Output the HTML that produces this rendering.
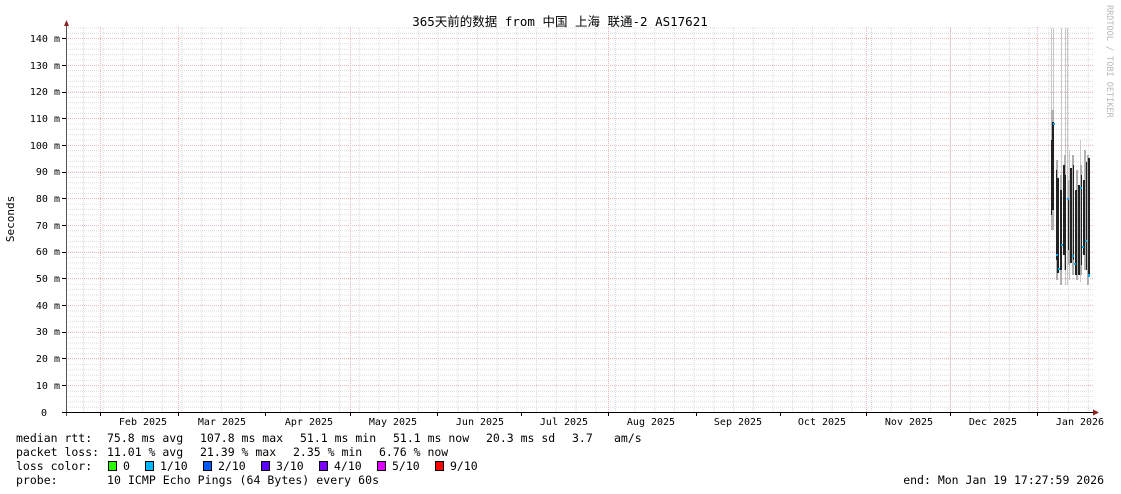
<!DOCTYPE html>
<html><head><meta charset="utf-8"><style>
html,body{margin:0;padding:0;background:#fff;}
svg{display:block;}
text{font-family:"DejaVu Sans Mono","Liberation Mono","Noto Sans CJK SC",monospace;fill:#000;}
</style></head><body>
<svg width="1121" height="494" viewBox="0 0 1121 494" xmlns="http://www.w3.org/2000/svg">
<defs>
<pattern id="hmin" patternUnits="userSpaceOnUse" x="0" y="412" width="4" height="5.342">
<line x1="0" y1="0.5" x2="4" y2="0.5" stroke="#dcdcdc" stroke-width="1" stroke-dasharray="1,1"/>
</pattern>
<pattern id="vmin" patternUnits="userSpaceOnUse" x="83" y="0" width="19.7" height="4">
<line x1="0.5" y1="0" x2="0.5" y2="4" stroke="#d8d8d8" stroke-width="1" stroke-dasharray="1,1"/>
</pattern>
</defs>
<rect x="66" y="27" width="1027" height="385" fill="url(#hmin)"/>
<rect x="70" y="27" width="1023" height="385" fill="url(#vmin)"/>
<g stroke="#f3b8b8" stroke-width="1" stroke-dasharray="1,1">
<line x1="66" y1="38.5" x2="1093" y2="38.5"/>
<line x1="66" y1="65.5" x2="1093" y2="65.5"/>
<line x1="66" y1="92.5" x2="1093" y2="92.5"/>
<line x1="66" y1="118.5" x2="1093" y2="118.5"/>
<line x1="66" y1="145.5" x2="1093" y2="145.5"/>
<line x1="66" y1="172.5" x2="1093" y2="172.5"/>
<line x1="66" y1="198.5" x2="1093" y2="198.5"/>
<line x1="66" y1="225.5" x2="1093" y2="225.5"/>
<line x1="66" y1="252.5" x2="1093" y2="252.5"/>
<line x1="66" y1="278.5" x2="1093" y2="278.5"/>
<line x1="66" y1="305.5" x2="1093" y2="305.5"/>
<line x1="66" y1="332.5" x2="1093" y2="332.5"/>
<line x1="66" y1="358.5" x2="1093" y2="358.5"/>
<line x1="66" y1="385.5" x2="1093" y2="385.5"/>
<line x1="100.5" y1="27" x2="100.5" y2="412"/>
<line x1="178.5" y1="27" x2="178.5" y2="412"/>
<line x1="350.5" y1="27" x2="350.5" y2="412"/>
<line x1="608.5" y1="27" x2="608.5" y2="412"/>
<line x1="866.5" y1="27" x2="866.5" y2="412"/>
<line x1="950.5" y1="27" x2="950.5" y2="412"/>
<line x1="1037.5" y1="27" x2="1037.5" y2="412"/>
</g>
<g stroke="#c8c8c8" stroke-width="1">
<line x1="1051.5" y1="28" x2="1051.5" y2="230"/>
<line x1="1053.5" y1="28" x2="1053.5" y2="215"/>
<line x1="1061.5" y1="28" x2="1061.5" y2="285"/>
<line x1="1065.5" y1="28" x2="1065.5" y2="285"/>
<line x1="1067.5" y1="28" x2="1067.5" y2="285"/>
<line x1="1069.5" y1="150" x2="1069.5" y2="280"/>
<line x1="1080.5" y1="140" x2="1080.5" y2="282"/>
</g>
<g fill="#b0b0b0">
<rect x="1051" y="110" width="3" height="120"/>
<rect x="1056" y="160" width="2" height="120"/>
<rect x="1060" y="175" width="2" height="110"/>
<rect x="1064" y="155" width="2" height="115"/>
<rect x="1068" y="180" width="2" height="85"/>
<rect x="1072" y="155" width="2" height="120"/>
<rect x="1076" y="170" width="2" height="110"/>
<rect x="1080" y="165" width="2" height="110"/>
<rect x="1084" y="150" width="2" height="120"/>
<rect x="1087" y="155" width="2" height="130"/>
</g>
<g fill="#222">
<rect x="1051" y="140" width="1" height="75"/>
<rect x="1052" y="122" width="2" height="88"/>
<rect x="1056" y="170" width="1" height="90"/>
<rect x="1057" y="178" width="2" height="95"/>
<rect x="1060" y="190" width="2" height="80"/>
<rect x="1063" y="165" width="2" height="90"/>
<rect x="1065" y="175" width="1" height="95"/>
<rect x="1068" y="200" width="1" height="50"/>
<rect x="1070" y="168" width="2" height="95"/>
<rect x="1073" y="165" width="1" height="95"/>
<rect x="1075" y="190" width="2" height="85"/>
<rect x="1078" y="185" width="2" height="90"/>
<rect x="1081" y="175" width="1" height="90"/>
<rect x="1083" y="180" width="2" height="75"/>
<rect x="1086" y="162" width="1" height="108"/>
<rect x="1088" y="158" width="2" height="118"/>
</g>
<g fill="#00a8f0">
<rect x="1053" y="123" width="2" height="2"/>
<rect x="1056" y="254" width="2" height="2"/>
<rect x="1058" y="268" width="2" height="2"/>
<rect x="1061" y="244" width="2" height="2"/>
<rect x="1067" y="198" width="2" height="2"/>
<rect x="1072" y="255" width="2" height="2"/>
<rect x="1074" y="263" width="2" height="2"/>
<rect x="1080" y="187" width="2" height="2"/>
<rect x="1082" y="246" width="2" height="2"/>
<rect x="1085" y="240" width="2" height="2"/>
<rect x="1088" y="274" width="2" height="3"/>
</g>
<line x1="66.5" y1="22" x2="66.5" y2="416" stroke="#555" stroke-width="1"/>
<line x1="62" y1="412.5" x2="1095" y2="412.5" stroke="#000" stroke-width="1"/>
<polygon points="64,26 69,26 66.5,20" fill="#8b2222"/>
<polygon points="1093,409.5 1093,415.5 1099,412.5" fill="#8b2222"/>
<g stroke="#000" stroke-width="1">
<line x1="62" y1="38.5" x2="66" y2="38.5"/><line x1="62" y1="65.5" x2="66" y2="65.5"/><line x1="62" y1="92.5" x2="66" y2="92.5"/><line x1="62" y1="118.5" x2="66" y2="118.5"/><line x1="62" y1="145.5" x2="66" y2="145.5"/><line x1="62" y1="172.5" x2="66" y2="172.5"/><line x1="62" y1="198.5" x2="66" y2="198.5"/><line x1="62" y1="225.5" x2="66" y2="225.5"/><line x1="62" y1="252.5" x2="66" y2="252.5"/><line x1="62" y1="278.5" x2="66" y2="278.5"/><line x1="62" y1="305.5" x2="66" y2="305.5"/><line x1="62" y1="332.5" x2="66" y2="332.5"/><line x1="62" y1="358.5" x2="66" y2="358.5"/><line x1="62" y1="385.5" x2="66" y2="385.5"/>
<line x1="100.5" y1="412" x2="100.5" y2="416"/><line x1="178.5" y1="412" x2="178.5" y2="416"/><line x1="265.5" y1="412" x2="265.5" y2="416"/><line x1="350.5" y1="412" x2="350.5" y2="416"/><line x1="437.5" y1="412" x2="437.5" y2="416"/><line x1="521.5" y1="412" x2="521.5" y2="416"/><line x1="608.5" y1="412" x2="608.5" y2="416"/><line x1="696.5" y1="412" x2="696.5" y2="416"/><line x1="780.5" y1="412" x2="780.5" y2="416"/><line x1="866.5" y1="412" x2="866.5" y2="416"/><line x1="950.5" y1="412" x2="950.5" y2="416"/><line x1="1037.5" y1="412" x2="1037.5" y2="416"/>
</g>
<g font-size="10" text-anchor="end">
<text x="60" y="42">140 m</text><text x="60" y="69">130 m</text><text x="60" y="95">120 m</text><text x="60" y="122">110 m</text><text x="60" y="149">100 m</text><text x="60" y="175">90 m</text><text x="60" y="202">80 m</text><text x="60" y="229">70 m</text><text x="60" y="255">60 m</text><text x="60" y="282">50 m</text><text x="60" y="309">40 m</text><text x="60" y="335">30 m</text><text x="60" y="362">20 m</text><text x="60" y="389">10 m</text><text x="47" y="416">0</text>
</g>
<g font-size="10" text-anchor="middle">
<text x="143" y="425">Feb 2025</text><text x="222" y="425">Mar 2025</text><text x="309" y="425">Apr 2025</text><text x="393" y="425">May 2025</text><text x="480" y="425">Jun 2025</text><text x="564" y="425">Jul 2025</text><text x="651" y="425">Aug 2025</text><text x="738" y="425">Sep 2025</text><text x="822" y="425">Oct 2025</text><text x="909" y="425">Nov 2025</text><text x="993" y="425">Dec 2025</text><text x="1080" y="425">Jan 2026</text>
</g>
<text x="560" y="26" font-size="12.5" text-anchor="middle">365天前的数据 from 中国 上海 联通-2 AS17621</text>
<text transform="translate(14,219) rotate(-90)" font-size="11" text-anchor="middle">Seconds</text>
<text transform="translate(1107,5) rotate(90)" font-size="8.5" style="fill:#b8b8b8">RRDTOOL / TOBI OETIKER</text>
<g font-size="11.5">
<text x="16" y="442">median rtt:</text>
<text x="107" y="442">75.8 ms avg</text>
<text x="200" y="442">107.8 ms max</text>
<text x="300" y="442">51.1 ms min</text>
<text x="393" y="442">51.1 ms now</text>
<text x="486" y="442">20.3 ms sd</text>
<text x="572" y="442">3.7</text>
<text x="614" y="442">am/s</text>
<text x="16" y="456">packet loss:</text>
<text x="107" y="456">11.01 % avg</text>
<text x="200" y="456">21.39 % max</text>
<text x="293" y="456">2.35 % min</text>
<text x="379" y="456">6.76 % now</text>
<text x="16" y="470">loss color:</text>
<text x="123" y="470">0</text><text x="160" y="470">1/10</text><text x="218" y="470">2/10</text><text x="276" y="470">3/10</text><text x="334" y="470">4/10</text><text x="392" y="470">5/10</text><text x="450" y="470">9/10</text>
<text x="16" y="484">probe:</text>
<text x="107" y="484" textLength="272" lengthAdjust="spacing">10 ICMP Echo Pings (64 Bytes) every 60s</text>
<text x="1104" y="484" text-anchor="end">end: Mon Jan 19 17:27:59 2026</text>
</g>
<g stroke="#000" stroke-width="1">
<rect x="108.5" y="461.5" width="8" height="9" fill="#26ff00"/>
<rect x="145.5" y="461.5" width="8" height="9" fill="#00b8ff"/>
<rect x="203.5" y="461.5" width="8" height="9" fill="#0059ff"/>
<rect x="261.5" y="461.5" width="8" height="9" fill="#5e00ff"/>
<rect x="319.5" y="461.5" width="8" height="9" fill="#7e00ff"/>
<rect x="377.5" y="461.5" width="8" height="9" fill="#dd00ff"/>
<rect x="435.5" y="461.5" width="8" height="9" fill="#ff0000"/>
</g>
</svg>
</body></html>
